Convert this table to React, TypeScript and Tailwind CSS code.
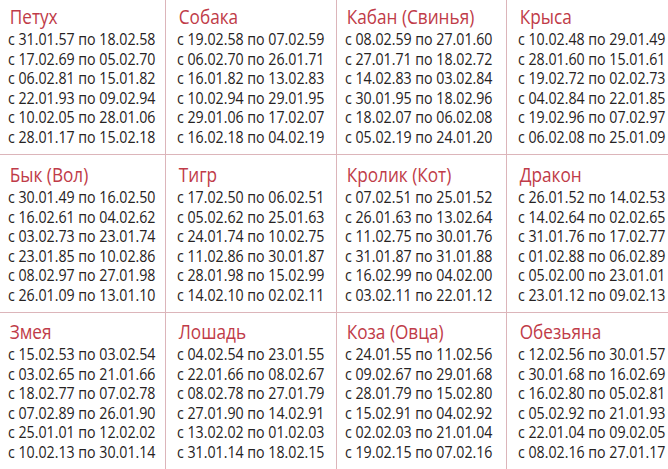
const rows = [
  [
    { name: "Петух", dates: ["с 31.01.57 по 18.02.58", "с 17.02.69 по 05.02.70", "с 06.02.81 по 15.01.82", "с 22.01.93 по 09.02.94", "с 10.02.05 по 28.01.06", "с 28.01.17 по 15.02.18"] },
    { name: "Собака", dates: ["с 19.02.58 по 07.02.59", "с 06.02.70 по 26.01.71", "с 16.01.82 по 13.02.83", "с 10.02.94 по 29.01.95", "с 29.01.06 по 17.02.07", "с 16.02.18 по 04.02.19"] },
    { name: "Кабан (Свинья)", dates: ["с 08.02.59 по 27.01.60", "с 27.01.71 по 18.02.72", "с 14.02.83 по 03.02.84", "с 30.01.95 по 18.02.96", "с 18.02.07 по 06.02.08", "с 05.02.19 по 24.01.20"] },
    { name: "Крыса", dates: ["с 10.02.48 по 29.01.49", "с 28.01.60 по 15.01.61", "с 19.02.72 по 02.02.73", "с 04.02.84 по 22.01.85", "с 19.02.96 по 07.02.97", "с 06.02.08 по 25.01.09"] },
  ],
  [
    { name: "Бык (Вол)", dates: ["с 30.01.49 по 16.02.50", "с 16.02.61 по 04.02.62", "с 03.02.73 по 23.01.74", "с 23.01.85 по 10.02.86", "с 08.02.97 по 27.01.98", "с 26.01.09 по 13.01.10"] },
    { name: "Тигр", dates: ["с 17.02.50 по 06.02.51", "с 05.02.62 по 25.01.63", "с 24.01.74 по 10.02.75", "с 11.02.86 по 30.01.87", "с 28.01.98 по 15.02.99", "с 14.02.10 по 02.02.11"] },
    { name: "Кролик (Кот)", dates: ["с 07.02.51 по 25.01.52", "с 26.01.63 по 13.02.64", "с 11.02.75 по 30.01.76", "с 31.01.87 по 31.01.88", "с 16.02.99 по 04.02.00", "с 03.02.11 по 22.01.12"] },
    { name: "Дракон", dates: ["с 26.01.52 по 14.02.53", "с 14.02.64 по 02.02.65", "с 31.01.76 по 17.02.77", "с 01.02.88 по 06.02.89", "с 05.02.00 по 23.01.01", "с 23.01.12 по 09.02.13"] },
  ],
  [
    { name: "Змея", dates: ["с 15.02.53 по 03.02.54", "с 03.02.65 по 21.01.66", "с 18.02.77 по 07.02.78", "с 07.02.89 по 26.01.90", "с 25.01.01 по 12.02.02", "с 10.02.13 по 30.01.14"] },
    { name: "Лошадь", dates: ["с 04.02.54 по 23.01.55", "с 22.01.66 по 08.02.67", "с 08.02.78 по 27.01.79", "с 27.01.90 по 14.02.91", "с 13.02.02 по 01.02.03", "с 31.01.14 по 18.02.15"] },
    { name: "Коза (Овца)", dates: ["с 24.01.55 по 11.02.56", "с 09.02.67 по 29.01.68", "с 28.01.79 по 15.02.80", "с 15.02.91 по 04.02.92", "с 02.02.03 по 21.01.04", "с 19.02.15 по 07.02.16"] },
    { name: "Обезьяна", dates: ["с 12.02.56 по 30.01.57", "с 30.01.68 по 16.02.69", "с 16.02.80 по 05.02.81", "с 05.02.92 по 21.01.93", "с 22.01.04 по 09.02.05", "с 08.02.16 по 27.01.17"] },
  ],
];

// columns sit a little unevenly in the print
const colPad = ["pl-[8px]", "pl-[11px]", "pl-[8px]", "pl-[11px]"];
const rowCls = [
  "h-[155px] pt-[6px] border-b border-[#dcb5ba]",
  "h-[158px] pt-[9px] border-b border-[#dcb5ba]",
  "h-[156px] pt-[8px]",
];

const Cell = ({ name, dates, col, row }: { name: string; dates: string[]; col: number; row: number }) => {
  return (
    <div className={`${colPad[col]} ${rowCls[row]} ${col < 3 ? "border-r border-r-[#dcb5ba]" : ""}`}>
      <div className="origin-left scale-x-[0.86]">
        <div className="pl-[2px] text-[20px] leading-[22px] text-[#c03b48] whitespace-nowrap">{name}</div>
        <div className="mt-[1px] text-[16.5px] leading-[19.6px] text-[#262222]">
          {dates.map((d) => (
            <div key={d} className="whitespace-nowrap">{d}</div>
          ))}
        </div>
      </div>
    </div>
  );
};

export default function App() {
  return (
    <div
      className="w-[668px] h-[469px] overflow-hidden bg-white"
      style={{ fontFamily: '"Open Sans", "Noto Sans", sans-serif' }}
    >
      {rows.map((r, ri) => (
        <div key={ri} className="grid grid-cols-[166px_171px_170px_161px]">
          {r.map((c, ci) => (
            <Cell key={c.name} name={c.name} dates={c.dates} col={ci} row={ri} />
          ))}
        </div>
      ))}
    </div>
  );
}
